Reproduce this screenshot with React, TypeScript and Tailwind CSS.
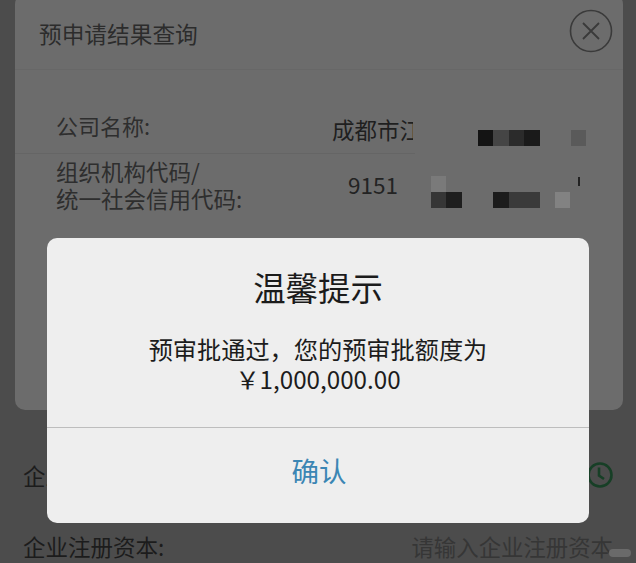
import React from "react";

const font = { fontFamily: '"Noto Sans CJK SC", "Noto Sans", sans-serif' };

function Block({ c, w = "w-[15px]" }: { c: string; w?: string }) {
  return <div className={`h-[16px] ${w} ${c}`} />;
}

export default function App() {
  return (
    <div className="relative w-[636px] h-[563px] overflow-hidden bg-[#4c4c4c]" style={font}>
      {/* page behind the overlay */}
      <div className="flex flex-col pt-[457px] pl-[23px] pr-[23px] text-[#1c1c1c] text-[22.5px] leading-[30px]">
        <div className="flex items-center justify-between h-[36px]">
          <span>企业名称:</span>
          <svg width="30" height="30" viewBox="0 0 30 30" fill="none" stroke="#173f26" strokeWidth="2.6" className="mr-[-2px]">
            <circle cx="15" cy="15" r="11.5" />
            <path d="M14 7.5v8l5 3.5" />
          </svg>
        </div>
        <div className="flex items-center justify-between mt-[38px]">
          <span>企业注册资本:</span>
          <span className="text-[#363636] text-[22.4px]">请输入企业注册资本</span>
        </div>
      </div>
      <div className="absolute left-[609px] top-[549px] w-[22px] h-[8px] rounded-full bg-[#6a6a6a]" />

      {/* query panel */}
      <div className="absolute left-[15px] top-[-6px] w-[608px] h-[416px] rounded-[10px] bg-[#6c6c6c] flex flex-col">
        <div className="flex items-center justify-between h-[76px] pt-[4px] pl-[24px] pr-[10px] border-b border-[#676767]">
          <span className="text-[22.7px] leading-[30px] text-[#2c2c2c]">预申请结果查询</span>
          <svg width="44" height="44" viewBox="0 0 44 44" fill="none" stroke="#3a3a3a" className="mb-[6px]">
            <circle cx="22" cy="22" r="20.5" strokeWidth="1.6" />
            <path d="M14 14l16 16M30 14L14 30" strokeWidth="1.8" />
          </svg>
        </div>
        <div className="flex items-center h-[84px] pt-[27px] pl-[41px] mr-[208px] border-b border-[#656565]">
          <span className="text-[22px] leading-[30px] text-[#2e2e2e] w-[276px]">公司名称:</span>
          <span className="text-[22.5px] leading-[30px] text-[#1f1f1f] w-[81px] h-[30px] overflow-hidden whitespace-nowrap mt-[8px]">成都市江</span>
        </div>
        <div className="flex items-start pl-[41px] pt-[4px]">
          <div className="text-[22.5px] leading-[27px] text-[#2e2e2e] w-[292px] shrink-0">
            <div>组织机构代码/</div>
            <div>统一社会信用代码:</div>
          </div>
          <span className="text-[22.5px] leading-[30px] text-[#232323] w-[50px] whitespace-nowrap mt-[11px]">9151</span>
        </div>
      </div>

      {/* mosaic over the numbers */}
      <div className="absolute left-[478px] top-[130px] flex">
        <Block c="bg-[#141414]" />
        <Block c="bg-[#454545]" w="w-[16px]" />
        <Block c="bg-[#2b2b2b]" />
        <Block c="bg-[#1a1a1a]" w="w-[16px]" />
        <Block c="bg-[#5a5a5a] ml-[31px]" />
      </div>
      <div className="absolute left-[431px] top-[176px] flex flex-col">
        <div className="w-[15px] h-[16px] bg-[#7a7a7a]" />
        <div className="flex">
          <Block c="bg-[#363636]" />
          <Block c="bg-[#1e1e1e]" w="w-[16px]" />
          <Block c="bg-[#1c1c1c] ml-[31px]" w="w-[16px]" />
          <Block c="bg-[#3a3a3a]" w="w-[31px]" />
          <Block c="bg-[#828282] ml-[15px]" />
        </div>
      </div>
      <div className="absolute left-[578px] top-[177px] w-[2px] h-[9px] bg-[#222222]" />

      {/* alert */}
      <div className="absolute left-[47px] top-[238px] w-[542px] h-[285px] rounded-[10px] bg-[#eeeeee] flex flex-col">
        <div className="h-[190px] flex flex-col items-center border-b border-[#bdbdbd]">
          <div className="mt-[27px] text-[32.4px] leading-[44px] text-[#1b1b1b]">温馨提示</div>
          <div className="mt-[25px] text-[24.2px] leading-[30px] text-[#1c1c1c] text-center">
            <div>预审批通过，您的预审批额度为</div>
            <div>￥1,000,000.00</div>
          </div>
        </div>
        <div className="flex-1 flex items-center justify-center text-[27.5px] text-[#3b86b4] pb-[9px] pl-[2px]">确认</div>
      </div>
    </div>
  );
}
